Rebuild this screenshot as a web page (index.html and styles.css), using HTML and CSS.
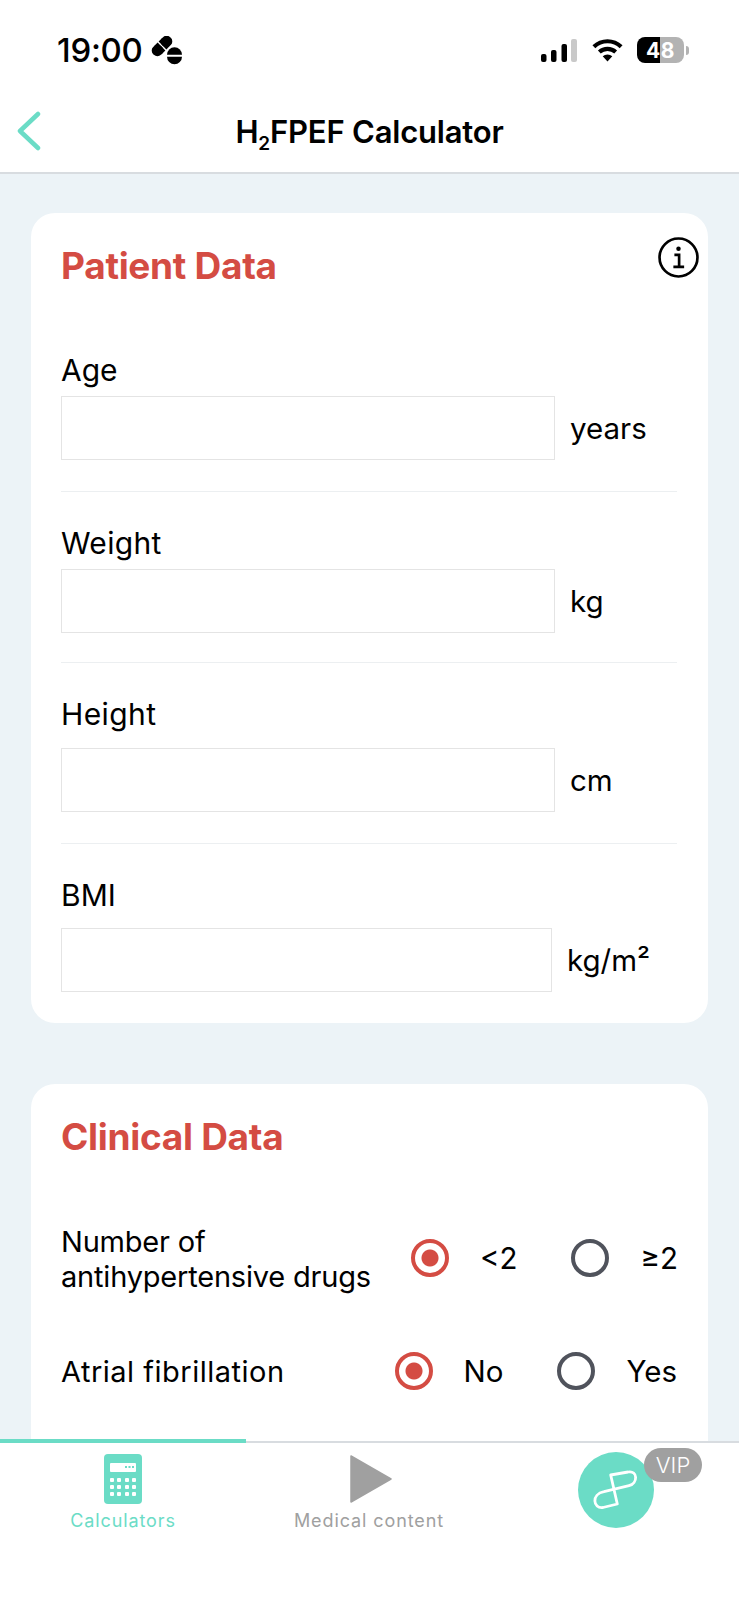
FILE: index.html
```html
<!DOCTYPE html>
<html lang="en">
<head>
    <meta charset="UTF-8">
    <meta name="viewport" content="width=device-width, initial-scale=1.0">
    <title>H2FPEF Calculator</title>
    <link rel="stylesheet" href="styles.css">
</head>
<body>
    <!-- Status bar -->
    <div class="status-bar">
        <div class="status-left">
            <span class="time">19:00</span>
            <svg class="pills" width="32" height="30" viewBox="0 0 32 30">
                <g transform="rotate(-45 11 10)">
                    <rect x="-1" y="4.500" width="11.300" height="11" rx="5" fill="#000"/>
                    <rect x="5" y="4.500" width="5.300" height="11" fill="#000"/>
                    <rect x="11.700" y="4.500" width="11.300" height="11" rx="5" fill="#000"/>
                    <rect x="11.700" y="4.500" width="5" height="11" fill="#000"/>
                </g>
                <path d="M16 18.800a7.500 7.500 0 0 1 15 0z" fill="#000"/>
                <path d="M16 20.800a7.500 7.500 0 0 0 15 0z" fill="#000"/>
            </svg>
        </div>
        <div class="status-right">
            <svg width="36" height="24" viewBox="0 0 36 24">
                <rect x="0" y="16" width="5.500" height="8" rx="2" fill="#000"/>
                <rect x="10" y="12" width="5.500" height="12" rx="2" fill="#000"/>
                <rect x="20.500" y="6" width="5.500" height="18" rx="2" fill="#000"/>
                <rect x="30" y="1" width="6" height="23" rx="2" fill="#c9c9c9"/>
            </svg>
            <svg class="wifi" width="31" height="24" viewBox="0 0 33 25">
                <path d="M2 9a21 21 0 0 1 29 0" fill="none" stroke="#000" stroke-width="4.400"/>
                <path d="M7.800 14.600a13 13 0 0 1 17.400 0" fill="none" stroke="#000" stroke-width="4.400"/>
                <path d="M11.400 19.200l5.100 5.600 5.100-5.600a7.600 7.600 0 0 0-10.200 0z" fill="#000"/>
            </svg>
            <div class="battery">
                <div class="battery-body"><span>48</span></div>
                <div class="battery-tip"></div>
            </div>
        </div>
    </div>

    <!-- Navigation -->
    <div class="nav-bar">
        <svg class="back" width="26" height="40" viewBox="0 0 26 40">
            <path d="M23 3L5 20l18 17" fill="none" stroke="#6bdcc6" stroke-width="4.500" stroke-linecap="round" stroke-linejoin="round"/>
        </svg>
        <h1>H<sub>2</sub>FPEF Calculator</h1>
    </div>

    <div class="content">
        <!-- Patient data -->
        <section class="card">
            <div class="card-head">
                <h2>Patient Data</h2>
                <svg class="info" width="41" height="41" viewBox="0 0 40 40">
                    <circle cx="20" cy="20" r="18.500" fill="none" stroke="#000" stroke-width="2.600"/>
                    <circle cx="20" cy="11.500" r="2.200" fill="#000"/>
                    <path d="M16 17.500h4.600v11.600M15 29.200h10.500" fill="none" stroke="#000" stroke-width="2.600"/>
                </svg>
            </div>
            <div class="field field-age">
                <label>Age</label>
                <div class="input-row"><div class="input"></div><span class="unit">years</span></div>
            </div>
            <div class="field field-weight">
                <label>Weight</label>
                <div class="input-row"><div class="input"></div><span class="unit">kg</span></div>
            </div>
            <div class="field field-height">
                <label>Height</label>
                <div class="input-row"><div class="input"></div><span class="unit">cm</span></div>
            </div>
            <div class="field field-bmi">
                <label>BMI</label>
                <div class="input-row"><div class="input input-short"></div><span class="unit">kg/m²</span></div>
            </div>
        </section>

        <!-- Clinical data -->
        <section class="card card-open">
            <div class="card-head">
                <h2>Clinical Data</h2>
            </div>
            <div class="option-row row-drugs">
                <div class="option-label">Number of<br>antihypertensive drugs</div>
                <div class="options">
                    <span class="radio checked"></span><span class="option-text">&lt;2</span>
                    <span class="radio"></span><span class="option-text">≥2</span>
                </div>
            </div>
            <div class="option-row row-af">
                <div class="option-label">Atrial fibrillation</div>
                <div class="options">
                    <span class="radio checked"></span><span class="option-text">No</span>
                    <span class="radio"></span><span class="option-text">Yes</span>
                </div>
            </div>
        </section>
    </div>

    <!-- Tab bar -->
    <div class="tab-bar">
        <div class="tab-active-line"></div>
        <div class="tab tab-calc">
            <svg width="38" height="50" viewBox="0 0 38 50">
                <rect width="38" height="50" rx="4" fill="#6bdcc6"/>
                <rect x="6" y="9" width="26" height="9" rx="1" fill="#fff"/>
                <g fill="#6bdcc6"><rect x="21" y="12" width="2" height="2"/><rect x="24.500" y="12" width="2" height="2"/><rect x="28" y="12" width="2" height="2"/></g>
                <g fill="#fff">
                    <rect x="6" y="24" width="4" height="4" rx="1"/><rect x="13" y="24" width="4" height="4" rx="1"/><rect x="21" y="24" width="4" height="4" rx="1"/><rect x="28" y="24" width="4" height="4" rx="1"/>
                    <rect x="6" y="31" width="4" height="4" rx="1"/><rect x="13" y="31" width="4" height="4" rx="1"/><rect x="21" y="31" width="4" height="4" rx="1"/><rect x="28" y="31" width="4" height="4" rx="1"/>
                    <rect x="6" y="38" width="4" height="4" rx="1"/><rect x="13" y="38" width="4" height="4" rx="1"/><rect x="21" y="38" width="4" height="4" rx="1"/><rect x="28" y="38" width="4" height="4" rx="1"/>
                </g>
            </svg>
            <span class="tab-label active">Calculators</span>
        </div>
        <div class="tab tab-media">
            <svg width="44" height="48" viewBox="0 0 44 48">
                <path d="M2 1l40 23L2 47z" fill="#a0a0a0" stroke="#a0a0a0" stroke-width="1.500" stroke-linejoin="round"/>
            </svg>
            <span class="tab-label">Medical content</span>
        </div>
        <div class="tab-profile">
            <svg width="76" height="76" viewBox="0 0 76 76">
                <circle cx="38" cy="38" r="38" fill="#6bdcc6"/>
                <path d="M32.700 23L39.300 52 25 55.500C15 57 13 42 26 39.700L51 33.700C60 31.500 60 18 50 20z" fill="none" stroke="#fff" stroke-width="2.800" stroke-linejoin="round"/>
            </svg>
            <span class="vip">VIP</span>
        </div>
    </div>
</body>
</html>
```

FILE: styles.css
```css
/* General Styles */
html, body {
    margin: 0;
    padding: 0;
}
body {
    width: 739px;
    height: 1600px;
    display: flex;
    flex-direction: column;
    overflow: hidden;
    font-family: "Inter", "Liberation Sans", sans-serif;
    color: #000;
    background: #fff;
}

/* Status Bar */
.status-bar {
    height: 100px;
    flex-shrink: 0;
    display: flex;
    justify-content: space-between;
    align-items: center;
    padding: 0 50px 0 57px;
    box-sizing: border-box;
}
.status-left {
    display: flex;
    align-items: center;
    gap: 8px;
}
.time {
    font-size: 33px;
    font-weight: 500;
    letter-spacing: -0.3px;
}
.pills {
    margin-top: 2px;
}
.status-right {
    display: flex;
    align-items: center;
    gap: 15px;
}
.battery {
    display: flex;
    align-items: center;
    gap: 2px;
    margin-left: -1px;
}
.battery-body {
    width: 47px;
    height: 26px;
    border-radius: 8px;
    background: linear-gradient(90deg, #000 49%, #b3b3b3 49%);
    display: flex;
    align-items: center;
    justify-content: center;
}
.battery-body span {
    color: #fff;
    font-size: 21px;
    font-weight: 700;
    letter-spacing: 0.5px;
}
.battery-tip {
    width: 3px;
    height: 9px;
    border-radius: 0 3px 3px 0;
    background: #b3b3b3;
}

/* Navigation */
.nav-bar {
    height: 74px;
    flex-shrink: 0;
    display: flex;
    align-items: center;
    justify-content: center;
    padding-bottom: 9px;
    box-sizing: border-box;
    border-bottom: 2px solid #d8dce0;
}
.nav-bar .back {
    position: absolute;
    left: 15px;
    top: 111px;
}
.nav-bar h1 {
    margin: 0;
    font-size: 31px;
    font-weight: 600;
    letter-spacing: -0.2px;
}
.nav-bar sub {
    font-size: 19px;
    line-height: 0;
}

/* Content */
.content {
    flex: 1;
    min-height: 0;
    overflow: hidden;
    background: #ecf3f7;
    padding: 39px 31px 0;
}
.card {
    background: #fff;
    border-radius: 24px;
    padding: 0 31px 0 30px;
    margin-bottom: 61px;
}
.card-open {
    padding-bottom: 120px;
}
.card-head {
    display: flex;
    justify-content: space-between;
    align-items: flex-start;
}
.card-head h2 {
    margin: 32px 0 0;
    font-size: 37px;
    line-height: 42px;
    font-weight: 700;
    color: #d44c43;
    letter-spacing: -0.3px;
}
.info {
    margin: 24px -22px 0 0;
}

/* Input Fields */
.field {
    border-bottom: 1px solid #eceff1;
    padding-bottom: 31px;
}
.field:last-child {
    border-bottom: none;
}
.field label {
    display: block;
    font-size: 30px;
    line-height: 36px;
    margin-bottom: 8px;
}
.field-age { padding-top: 65px; }
.field-weight { padding-top: 33px; padding-bottom: 29px; }
.field-weight label { letter-spacing: 0.3px; }
.field-height { padding-top: 33px; }
.field-height label { margin-bottom: 16px; letter-spacing: 0.4px; }
.field-bmi { padding-top: 33px; }
.field-bmi label { margin-bottom: 15px; }
.input-row {
    display: flex;
    align-items: center;
    gap: 15px;
}
.input {
    width: 494px;
    height: 64px;
    box-sizing: border-box;
    border: 1.500px solid #e4e4e4;
    flex-shrink: 0;
}
.input-short {
    width: 491px;
}
.unit {
    font-size: 29.500px;
}

/* Radio Rows */
.option-row {
    display: flex;
    justify-content: space-between;
    align-items: center;
}
.option-label {
    font-size: 29px;
    line-height: 35px;
}
.options {
    display: flex;
    align-items: center;
}
.option-text {
    font-size: 29.500px;
}
.radio {
    width: 38px;
    height: 38px;
    box-sizing: border-box;
    border-radius: 50%;
    border: 4px solid #50535c;
    margin-right: 31px;
}
.radio.checked {
    border-color: #d44c43;
    background: radial-gradient(circle, #d44c43 0, #d44c43 8px, #fff 9px);
}
.option-text + .radio {
    margin-left: 54px;
}
.row-drugs { margin-top: 66px; }
.row-drugs .option-label { letter-spacing: -0.2px; }
.row-drugs .options { margin-top: -2px; margin-right: -1px; }
.row-af { margin-top: 58px; }
.row-af .option-label { letter-spacing: 0.5px; }

/* Tab Bar */
.tab-bar {
    height: 159px;
    flex-shrink: 0;
    box-sizing: border-box;
    border-top: 2px solid #d8dce0;
    background: #fff;
    position: relative;
    display: flex;
}
.tab-active-line {
    position: absolute;
    left: 0;
    top: -4px;
    width: 246px;
    height: 4px;
    background: #6bdcc6;
}
.tab {
    display: flex;
    flex-direction: column;
    align-items: center;
}
.tab-calc {
    width: 246px;
    padding-top: 11px;
}
.tab-calc .tab-label {
    margin-top: 6px;
}
.tab-media {
    width: 246px;
    padding-top: 12px;
}
.tab-media svg {
    margin-left: 4px;
}
.tab-label {
    font-size: 18px;
    letter-spacing: 0.9px;
    color: #a0a0a0;
    margin-top: 7px;
}
.tab-label.active {
    color: #6bdcc6;
}
.tab-profile {
    position: absolute;
    left: 578px;
    top: 9px;
}
.vip {
    position: absolute;
    left: 66px;
    top: -4px;
    width: 58px;
    height: 34px;
    border-radius: 17px;
    background: #a0a0a0;
    color: #fff;
    font-size: 22px;
    font-weight: 300;
    line-height: 34px;
    text-align: center;
}
```
